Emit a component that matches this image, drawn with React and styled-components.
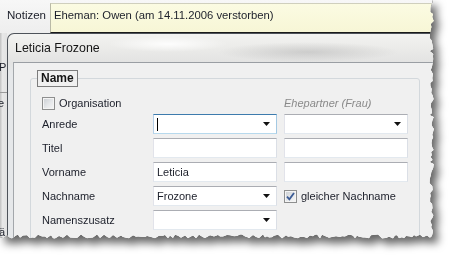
import React from 'react';
import styled, { createGlobalStyle } from 'styled-components';

const Global = createGlobalStyle`
  html, body { margin: 0; padding: 0; background: #ffffff; }
  body {
    width: 453px; height: 259px; overflow: hidden;
    font-family: "Liberation Sans", Arial, sans-serif;
  }
`;

function makeTorn() {
  let s = 11;
  const rnd = () => { s = (s * 9301 + 49297) % 233280; return s / 233280; };
  const pts = ['0px 0px', '432px 0px'];
  for (let y = 2; y < 234; y += 2 + Math.floor(rnd() * 3)) {
    pts.push(`${(429.5 + rnd() * 4.5).toFixed(1)}px ${y}px`);
  }
  pts.push('432px 236px');
  for (let x = 430; x > 0; x -= 2 + Math.floor(rnd() * 3)) {
    pts.push(`${x}px ${(234.5 + rnd() * 4).toFixed(1)}px`);
  }
  pts.push('0px 237px');
  return `polygon(${pts.join(',')})`;
}

const TORN = makeTorn();

const ShadowWrap = styled.div`
  width: 453px;
  height: 259px;
  filter: drop-shadow(0 0 0.6px rgba(0, 0, 0, 0.95)) drop-shadow(5px 6px 4px rgba(0, 0, 0, 0.6));
`;

const Paper = styled.div`
  width: 437px;
  height: 241px;
  background: #f0f0f0;
  overflow: hidden;
  clip-path: ${p => p.$clip};
  display: flex;
  flex-direction: column;
  font-size: 11px;
  color: #1c1f2a;
`;

const NotesRow = styled.div`
  height: 33px;
  flex: none;
  display: flex;
  padding-top: 3px;
  box-sizing: border-box;
  background: linear-gradient(#f7f7f7, #eeeeee);
`;

const NotesLabel = styled.div`
  width: 50px;
  flex: none;
  box-sizing: border-box;
  padding: 5px 0 0 7px;
  line-height: 14px;
  font-size: 11.5px;
`;

const NotesField = styled.div`
  flex: 1;
  background: linear-gradient(#fbfbe2, #f7f6d6);
  border-left: 1px solid #b9b9a6;
  border-top: 1px solid #cfcfbd;
  border-bottom: 1px solid #1a1a1a;
  padding: 4px 0 0 3px;
  line-height: 14px;
  font-size: 11.3px;
  white-space: nowrap;
`;

const Main = styled.div`
  flex: 1;
  display: flex;
  min-height: 0;
  background: #ededed;
`;

const LeftStrip = styled.div`
  width: 7px;
  flex: none;
  overflow: hidden;
  display: flex;
  flex-direction: column;
  background: linear-gradient(90deg, #c8c8c8 0, #c8c8c8 1px, #e8e8e8 2px, #e2e2e2 100%);
  line-height: 14px;
  font-size: 11px;
`;

const Frag = styled.div`
  margin-top: ${p => p.$top}px;
  margin-left: ${p => p.$left || 0}px;
  white-space: nowrap;
`;

const StripRule = styled.div`
  margin-top: ${p => p.$top}px;
  height: 1px;
  background: #9a9a9a;
`;

const Dialog = styled.div`
  flex: 1;
  display: flex;
  flex-direction: column;
  border: 1px solid #4e535a;
  border-right: none;
  border-bottom: none;
  border-top-left-radius: 7px;
  padding-left: 5px;
  background:
    radial-gradient(ellipse 90px 10px at 300px 18px, rgba(170, 170, 170, 0.45), rgba(170, 170, 170, 0)),
    radial-gradient(ellipse 60px 8px at 160px 10px, rgba(255, 255, 255, 0.9), rgba(255, 255, 255, 0)),
    linear-gradient(#f3f3f1 0px, #ebebe9 14px, #e3e3e2 28px, #e6e8ea 40px, #e6e8ea 100%);
`;

const TitleBar = styled.div`
  height: 28px;
  flex: none;
  display: flex;
  align-items: center;
  padding-left: 2px;
  font-size: 12.4px;
  color: #151515;
`;

const Client = styled.div`
  flex: 1;
  background: #f0f0f0;
  border-left: 1px solid #a3a7ab;
  border-top: 1px solid #9a9ea3;
  padding-left: 16px;
`;

const Group = styled.fieldset`
  width: 390px;
  box-sizing: border-box;
  margin: 7px 0 0 0;
  padding: 3px 0 30px 6px;
  border: 1px solid #d3d8dc;
  border-radius: 3px;
  min-width: 0;
`;

const Legend = styled.legend`
  padding: 0 3px;
  margin: 0;
  border: 1px solid #7c7c7c;
  font-weight: bold;
  font-size: 12px;
  line-height: 15px;
  color: #151515;
`;

const FormGrid = styled.div`
  margin-left: 5px;
  display: grid;
  grid-template-columns: 104px 124px 124px;
  grid-template-rows: repeat(6, 20px);
  row-gap: 4px;
  column-gap: 7px;
`;

const CheckRow = styled.div`
  display: flex;
  align-items: center;
  gap: 4px;
  align-self: ${p => p.$end ? 'end' : 'center'};
  grid-column: ${p => p.$span || 'auto'};
  height: 14px;
  white-space: nowrap;
`;

const Box = styled.span`
  width: 11px;
  height: 11px;
  flex: none;
  border: 1px solid #8e8f8f;
  background: linear-gradient(135deg, #c9cdd2 0%, #e6e8ea 55%, #f7f7f7 100%);
  display: flex;
  align-items: center;
  justify-content: center;
  box-shadow: inset 0 0 0 1px #f4f4f4;
`;

const Label = styled.div`
  display: flex;
  align-items: center;
  white-space: nowrap;
`;

const Hint = styled.div`
  align-self: end;
  height: 14px;
  line-height: 14px;
  font-style: italic;
  color: #8a8a8a;
  white-space: nowrap;
`;

const Field = styled.div`
  box-sizing: border-box;
  height: 20px;
  background: #ffffff;
  border: 1px solid;
  border-color: ${p => p.$focus
    ? '#3d7bad #a4c9e3 #b7d9ed #b5cfe7'
    : '#abadb3 #dbdfe6 #e3e9ef #e2e3ea'};
  display: flex;
  align-items: center;
  padding: 0 6px 0 3px;
  white-space: nowrap;
`;

const Value = styled.span`
  flex: 1;
  display: flex;
  align-items: center;
`;

const Caret = styled.span`
  width: 1px;
  height: 13px;
  background: #000;
`;

const Arrow = () => (
  <svg width="7" height="4" viewBox="0 0 7 4"><polygon points="0,0 7,0 3.5,4" fill="#111" /></svg>
);

const Check = () => (
  <svg width="9" height="9" viewBox="0 0 9 9">
    <path d="M1 4.6 L3.4 7.4 L8 1" fill="none" stroke="#3b5b95" strokeWidth="1.8" />
  </svg>
);

const Combo = ({ children, focus }) => (
  <Field $focus={focus}>
    <Value>{children}</Value>
    <Arrow />
  </Field>
);

export default function App() {
  return (
    <>
      <Global />
      <ShadowWrap>
        <Paper $clip={TORN}>
          <NotesRow>
            <NotesLabel>Notizen</NotesLabel>
            <NotesField>Eheman: Owen (am 14.11.2006 verstorben)</NotesField>
          </NotesRow>
          <Main>
            <LeftStrip>
              <Frag $top={27} $left={-1}>PE</Frag>
              <StripRule $top={18} />
              <Frag $top={3} $left={-2}>e</Frag>
              <Frag $top={115} $left={-1}>ä</Frag>
            </LeftStrip>
            <Dialog>
              <TitleBar>Leticia Frozone</TitleBar>
              <Client>
                <Group>
                  <Legend>Name</Legend>
                  <FormGrid>
                    <CheckRow $end $span="1 / span 2">
                      <Box />
                      Organisation
                    </CheckRow>
                    <Hint>Ehepartner (Frau)</Hint>

                    <Label>Anrede</Label>
                    <Combo focus><Caret /></Combo>
                    <Combo />

                    <Label>Titel</Label>
                    <Field />
                    <Field />

                    <Label>Vorname</Label>
                    <Field>Leticia</Field>
                    <Field />

                    <Label>Nachname</Label>
                    <Combo>Frozone</Combo>
                    <CheckRow>
                      <Box><Check /></Box>
                      gleicher Nachname
                    </CheckRow>

                    <Label>Namenszusatz</Label>
                    <Combo />
                  </FormGrid>
                </Group>
              </Client>
            </Dialog>
          </Main>
        </Paper>
      </ShadowWrap>
    </>
  );
}
